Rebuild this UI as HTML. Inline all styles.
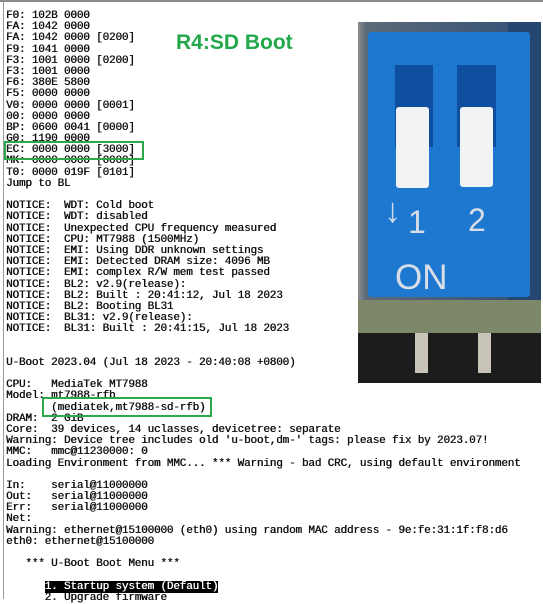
<!DOCTYPE html>
<html><head><meta charset="utf-8"><style>
body{margin:0;width:543px;height:599px;background:#fff;position:relative;overflow:hidden}
.topb{position:absolute;left:0;top:0;width:543px;height:2px;background:#8a8a8a}
.leftb{position:absolute;left:3px;top:2px;width:1px;height:597px;background:#9a9a9a}
pre{position:absolute;left:6px;top:11px;margin:0;font-family:"Liberation Mono",monospace;font-size:11px;line-height:11.18px;letter-spacing:-0.17px;color:#111;text-shadow:0.4px 0 0 #111}
.hl{background:#000;color:#fff;text-shadow:0.4px 0 0 #fff}
.box{position:absolute;border:2px solid #2aa84a}
.title{position:absolute;left:176px;top:31px;font-family:"Liberation Sans",sans-serif;font-weight:bold;font-size:21px;color:#22a84a}
.ph{position:absolute;left:358px;top:22px;width:183px;height:361px;background:linear-gradient(90deg,#8a8d92 0,#5d6a78 8px,#2f4f77 100%);overflow:hidden}
.ph div{position:absolute}
</style></head><body>
<div class="topb"></div><div class="leftb"></div>
<pre>F0: 102B 0000
FA: 1042 0000
FA: 1042 0000 [0200]
F9: 1041 0000
F3: 1001 0000 [0200]
F3: 1001 0000
F6: 380E 5800
F5: 0000 0000
V0: 0000 0000 [0001]
00: 0000 0000
BP: 0600 0041 [0000]
G0: 1190 0000
EC: 0000 0000 [3000]
MK: 0000 0000 [0000]
T0: 0000 019F [0101]
Jump to BL

NOTICE:  WDT: Cold boot
NOTICE:  WDT: disabled
NOTICE:  Unexpected CPU frequency measured
NOTICE:  CPU: MT7988 (1500MHz)
NOTICE:  EMI: Using DDR unknown settings
NOTICE:  EMI: Detected DRAM size: 4096 MB
NOTICE:  EMI: complex R/W mem test passed
NOTICE:  BL2: v2.9(release):
NOTICE:  BL2: Built : 20:41:12, Jul 18 2023
NOTICE:  BL2: Booting BL31
NOTICE:  BL31: v2.9(release):
NOTICE:  BL31: Built : 20:41:15, Jul 18 2023


U-Boot 2023.04 (Jul 18 2023 - 20:40:08 +0800)

CPU:   MediaTek MT7988
Model: mt7988-rfb
       (mediatek,mt7988-sd-rfb)
DRAM:  2 GiB
Core:  39 devices, 14 uclasses, devicetree: separate
Warning: Device tree includes old 'u-boot,dm-' tags: please fix by 2023.07!
MMC:   mmc@11230000: 0
Loading Environment from MMC... *** Warning - bad CRC, using default environment

In:    serial@11000000
Out:   serial@11000000
Err:   serial@11000000
Net:
Warning: ethernet@15100000 (eth0) using random MAC address - 9e:fe:31:1f:f8:d6
eth0: ethernet@15100000

   *** U-Boot Boot Menu ***

      <span class="hl">1. Startup system (Default)</span>
      2. Upgrade firmware</pre>
<div class="box" style="left:4px;top:141px;width:136px;height:15px"></div>
<div class="box" style="left:42px;top:397px;width:166px;height:16px"></div>
<div class="title">R4:SD Boot</div>
<div class="ph">
  <div style="left:150px;top:0;width:33px;height:280px;background:#25466e"></div>
  <div style="left:10px;top:10px;width:162px;height:265px;background:#1f78d0;border-radius:3px"></div>
  <div style="left:37px;top:43px;width:38px;height:82px;background:#0f4fa0"></div>
  <div style="left:99px;top:43px;width:39px;height:82px;background:#0f4fa0"></div>
  <div style="left:38px;top:85px;width:33px;height:81px;background:#f2f3f5;border-radius:3px"></div>
  <div style="left:102px;top:85px;width:33px;height:80px;background:#f2f3f5;border-radius:3px"></div>
  <div style="left:26px;top:170px;font:34px 'Liberation Sans',sans-serif;color:#cfd8e6">↓</div>
  <div style="left:50px;top:182px;font:32px 'Liberation Sans',sans-serif;color:#d8dee8">1</div>
  <div style="left:110px;top:180px;font:32px 'Liberation Sans',sans-serif;color:#d8dee8">2</div>
  <div style="left:37px;top:236px;font:35px 'Liberation Sans',sans-serif;color:#d8dee8">ON</div>
  <div style="left:0;top:278px;width:183px;height:33px;background:#7d876a"></div>
  <div style="left:0;top:311px;width:183px;height:50px;background:#1c1c1c"></div>
  <div style="left:57px;top:311px;width:13px;height:40px;background:#c9c4b8"></div>
  <div style="left:120px;top:311px;width:13px;height:40px;background:#c9c4b8"></div>
</div>
</body></html>
